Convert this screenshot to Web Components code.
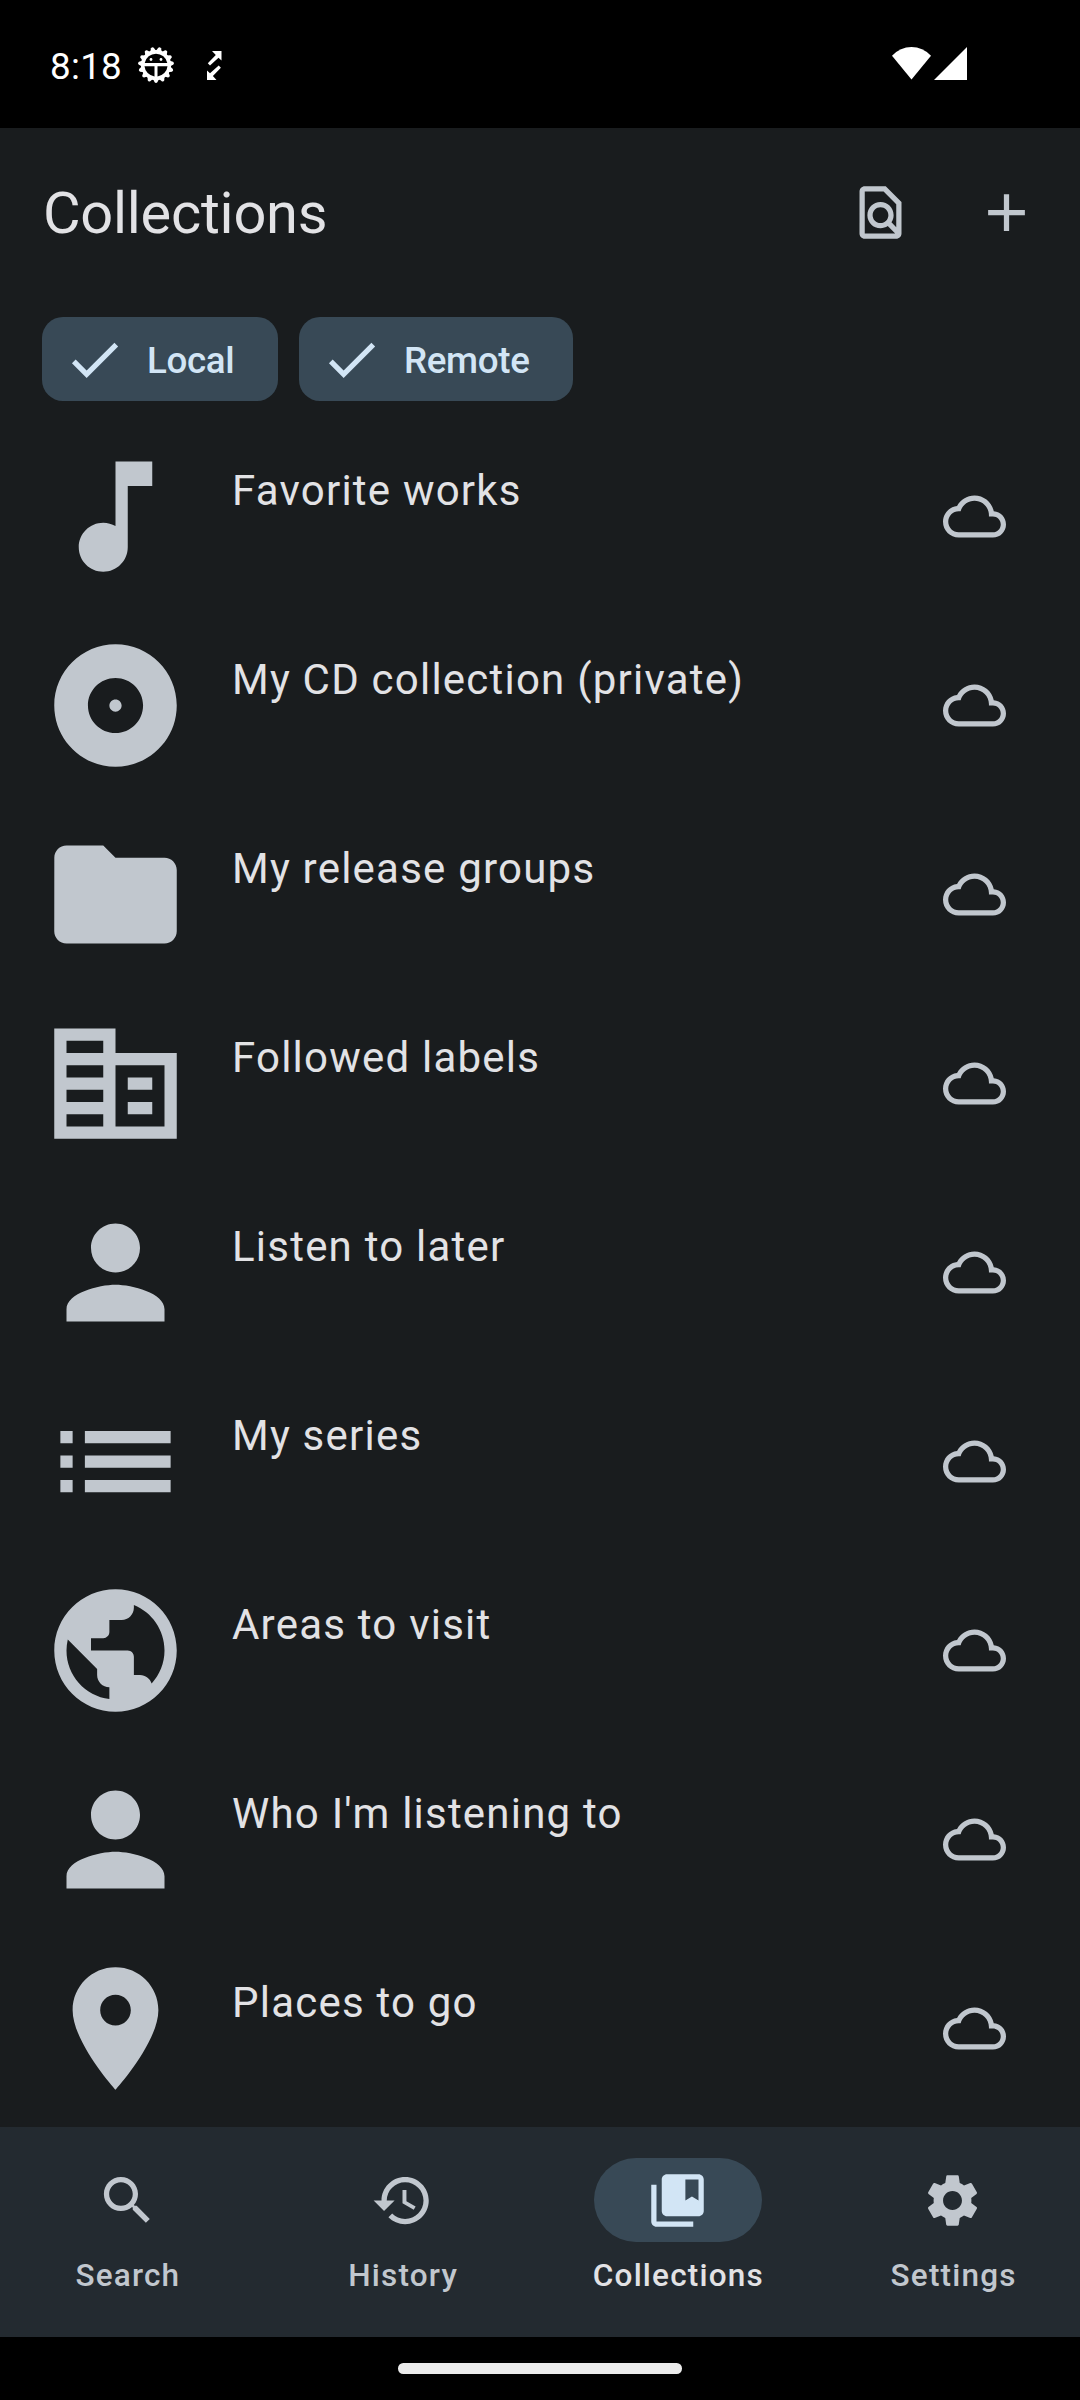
<!DOCTYPE html>
<html lang="en">
<head>
<meta charset="utf-8">
<title>Collections</title>
<style>
html,body{margin:0;padding:0;background:#000}
body{width:1080px;height:2400px;overflow:hidden;font-family:Roboto,sans-serif;color:#e2e2e5}
</style>
</head>
<body>
<collections-app></collections-app>
<script>
const PATHS = {
  find: 'M20 19.59V8l-6-6H6c-1.1 0-1.99.9-1.99 2L4 20c0 1.1.89 2 1.99 2H18c1.1 0 2-.9 2-2v-.41zM18 20H6V4h7.17L18 8.83v8.75l-1.83-1.83C16.69 14.96 17 14.02 17 13c0-2.76-2.24-5-5-5s-5 2.24-5 5 2.24 5 5 5c1.02 0 1.96-.31 2.76-.83L17.59 20H18zm-6-4c-1.66 0-3-1.34-3-3s1.34-3 3-3 3 1.34 3 3-1.34 3-3 3z',
  add: 'M19 13h-6v6h-2v-6H5v-2h6V5h2v6h6v2z',
  check: 'M9 16.17 4.83 12l-1.42 1.41L9 19 21 7l-1.41-1.41z',
  note: 'M12 3v10.55c-.59-.34-1.27-.55-2-.55-2.21 0-4 1.79-4 4s1.79 4 4 4 4-1.79 4-4V7h4V3h-6z',
  album: 'M12 2C6.48 2 2 6.48 2 12s4.48 10 10 10 10-4.48 10-10S17.52 2 12 2zm0 14.5c-2.49 0-4.5-2.01-4.5-4.5S9.51 7.5 12 7.5s4.5 2.01 4.5 4.5-2.01 4.5-4.5 4.5zm0-5.5c-.55 0-1 .45-1 1s.45 1 1 1 1-.45 1-1-.45-1-1-1z',
  folder: 'M10 4H4c-1.1 0-1.99.9-1.99 2L2 18c0 1.1.9 2 2 2h16c1.1 0 2-.9 2-2V8c0-1.1-.9-2-2-2h-8l-2-2z',
  business: 'M12 7V3H2v18h20V7H12zM10 19H4v-2h6v2zm0-4H4v-2h6v2zm0-4H4V9h6v2zm0-4H4V5h6v2zm10 12h-8V9h8v10zm-2-8h-4v2h4v-2zm0 4h-4v2h4v-2z',
  person: 'M12 12c2.21 0 4-1.79 4-4s-1.79-4-4-4-4 1.79-4 4 1.79 4 4 4zm0 2c-2.67 0-8 1.34-8 4v2h16v-2c0-2.66-5.33-4-8-4z',
  list: 'M3 13h2v-2H3v2zm0 4h2v-2H3v2zm0-8h2V7H3v2zm4 4h14v-2H7v2zm0 4h14v-2H7v2zM7 7v2h14V7H7z',
  globe: 'M12 2C6.48 2 2 6.48 2 12s4.48 10 10 10 10-4.48 10-10S17.52 2 12 2zm-1 17.93c-3.95-.49-7-3.85-7-7.93 0-.62.08-1.21.21-1.79L9 15v1c0 1.1.9 2 2 2v1.93zm6.9-2.54c-.26-.81-1-1.39-1.9-1.39h-1v-3c0-.55-.45-1-1-1H8v-2h2c.55 0 1-.45 1-1V7h2c1.1 0 2-.9 2-2v-.41c2.93 1.19 5 4.06 5 7.41 0 2.08-.8 3.97-2.1 5.39z',
  place: 'M12 2C8.13 2 5 5.13 5 9c0 5.25 7 13 7 13s7-7.75 7-13c0-3.87-3.13-7-7-7zm0 9.5c-1.38 0-2.5-1.12-2.5-2.5s1.12-2.5 2.5-2.5 2.5 1.12 2.5 2.5-1.12 2.5-2.5 2.5z',
  cloud: 'M19.35 10.04C18.67 6.59 15.64 4 12 4 9.11 4 6.6 5.64 5.35 8.04 2.34 8.36 0 10.91 0 14c0 3.31 2.69 6 6 6h13c2.76 0 5-2.24 5-5 0-2.64-2.05-4.78-4.65-4.96zM19 18H6c-2.21 0-4-1.79-4-4s1.79-4 4-4h.71C7.37 7.69 9.48 6 12 6c3.04 0 5.5 2.46 5.5 5.5v.5H19c1.66 0 3 1.34 3 3s-1.34 3-3 3z',
  search: 'M15.5 14h-.79l-.28-.27C15.41 12.59 16 11.11 16 9.5 16 5.91 13.09 3 9.5 3S3 5.91 3 9.5 5.91 16 9.5 16c1.61 0 3.09-.59 4.23-1.57l.27.28v.79l5 4.99L20.49 19l-4.99-5zm-6 0C7.01 14 5 11.99 5 9.5S7.01 5 9.5 5 14 7.01 14 9.5 11.99 14 9.5 14z',
  history: 'M13 3c-4.97 0-9 4.03-9 9H1l3.89 3.89.07.14L9 12H6c0-3.87 3.13-7 7-7s7 3.13 7 7-3.13 7-7 7c-1.93 0-3.68-.79-4.94-2.06l-1.42 1.42C8.27 19.99 10.51 21 13 21c4.97 0 9-4.03 9-9s-4.03-9-9-9zm-1 5v5l4.28 2.54.72-1.21-3.5-2.08V8H12z',
  collections: 'M4 6H2v14c0 1.1.9 2 2 2h14v-2H4V6zM20 2H8c-1.1 0-2 .9-2 2v12c0 1.1.9 2 2 2h12c1.1 0 2-.9 2-2V4c0-1.1-.9-2-2-2zm0 10-2.5-1.5L15 12V4h5v8z',
  settings: 'M19.14 12.94c.04-.3.06-.61.06-.94 0-.32-.02-.64-.07-.94l2.03-1.58c.18-.14.23-.41.12-.61l-1.92-3.32c-.12-.22-.37-.29-.59-.22l-2.39.96c-.5-.38-1.03-.7-1.62-.94l-.36-2.54c-.04-.24-.24-.41-.48-.41h-3.84c-.24 0-.43.17-.47.41l-.36 2.54c-.59.24-1.13.57-1.62.94l-2.39-.96c-.22-.08-.47 0-.59.22L2.74 8.87c-.12.21-.08.47.12.61l2.03 1.58c-.05.3-.09.63-.09.94s.02.64.07.94l-2.03 1.58c-.18.14-.23.41-.12.61l1.92 3.32c.12.22.37.29.59.22l2.39-.96c.5.38 1.03.7 1.62.94l.36 2.54c.05.24.24.41.48.41h3.84c.24 0 .44-.17.47-.41l.36-2.54c.59-.24 1.13-.56 1.62-.94l2.39.96c.22.08.47 0 .59-.22l1.92-3.32c.12-.22.07-.47-.12-.61l-2.01-1.58zM12 15.6c-1.98 0-3.6-1.62-3.6-3.6s1.62-3.6 3.6-3.6 3.6 1.62 3.6 3.6-1.62 3.6-3.6 3.6z'
};

const define = (name, render) => customElements.define(name, class extends HTMLElement {
  connectedCallback() {
    if (this.shadowRoot) return;
    this.attachShadow({ mode: 'open' }).innerHTML = render(this);
  }
});

define('md-icon', el => `
  <style>:host{display:block;flex:none;width:var(--icon-size,63px);height:var(--icon-size,63px)}svg{display:block;width:100%;height:100%}</style>
  <svg viewBox="0 0 24 24" fill="currentColor"><path fill-rule="evenodd" d="${PATHS[el.getAttribute('name')]}"/></svg>`);

define('status-bar', () => {
  let teeth = '';
  for (let i = 0; i < 15; i++) teeth += `<path d="M14.8 4.6 L16.6 .7 Q18 -.7 19.4 .7 L21.2 4.6Z" transform="rotate(${12 + i * 24} 18 18)"/>`;
  return `
  <style>
    :host{display:flex;align-items:flex-start;height:128px;box-sizing:border-box;padding:47px 113px 0 50px;background:#000;color:#fff}
    .time{font-size:36.75px;line-height:43px;letter-spacing:.3px;margin-top:-2px;width:88px}
    svg{display:block;flex:none}
    .bug{width:36px;height:36px}
    .sync{width:15px;height:29px;margin:4px 0 0 32.5px}
    .net{width:75px;height:33px;margin-left:auto}
  </style>
  <span class="time">8:18</span>
  <svg class="bug" viewBox="0 0 36 36" fill="#fff">
    ${teeth}
    <path fill-rule="evenodd" d="M18 2.900a15.100 15.100 0 1 0 0 30.200 15.100 15.100 0 0 0 0-30.200zM6.700 16a11.500 11.500 0 0 1 22.600 0zM6.500 19.200h10v10.300a11.500 11.500 0 0 1-10-10.300zM19.500 19.200h10a11.500 11.500 0 0 1-10 10.300z"/>
    <circle cx="13" cy="12.500" r="1.400"/><circle cx="23" cy="12.500" r="1.400"/>
  </svg>
  <svg class="sync" viewBox="0 0 15 29" fill="#fff">
    <path d="M5 0H14.500V9.500L11.500 6.700 3 14.500 .8 12.300 8.800 4z"/>
    <path d="M0 29V19.500L3 22.300 11.700 14.500 13.900 16.700 5.900 25 9.500 29z"/>
  </svg>
  <svg class="net" viewBox="0 0 75 33" fill="#fff">
    <path d="M0 8.700Q8.300 0 19.500 0T39 8.700L19.500 32.500z"/><path d="M75 0v33H42z"/>
  </svg>`;
});

define('top-bar', () => `
  <style>
    :host{display:flex;align-items:center;height:168px;box-sizing:border-box;padding:0 42px;color:#e2e2e5}
    h1{flex:1;margin:0;padding:4px 0 0 1px;font-weight:400;font-size:57.75px;line-height:73.5px;letter-spacing:-.25px}
    .actions{display:flex;gap:63px;color:#c1c7ce}
  </style>
  <h1><slot></slot></h1><div class="actions"><md-icon name="find"></md-icon><md-icon name="add"></md-icon></div>`);

define('filter-chip', () => `
  <style>
    :host{display:flex;align-items:center;gap:21px;height:84px;width:var(--chip-width);box-sizing:border-box;padding:0 0 0 21px;border-radius:21px;background:#384956;color:#d2e5f5;font-size:36.75px;font-weight:500;line-height:52px;letter-spacing:-.35px}
    span{padding-top:4px}
  </style>
  <md-icon name="check"></md-icon><span><slot></slot></span>`);

define('collection-row', el => `
  <style>
    :host{display:flex;align-items:center;gap:43px;height:189px;box-sizing:border-box;padding:0 74.5px 0 42px;font-size:42px;line-height:63px;letter-spacing:1.22px;color:#e2e2e5}
    md-icon{color:#c1c7ce}
    .lead{--icon-size:147px}
    .text{flex:1;align-self:flex-start;padding-top:37px}
  </style>
  <md-icon class="lead" name="${el.getAttribute('icon')}"></md-icon><span class="text"><slot></slot></span><md-icon name="cloud"></md-icon>`);

define('nav-item', el => `
  <style>
    :host{display:flex;flex:1 1 0;flex-direction:column;align-items:center;gap:12.5px;color:#c1c7ce;font-size:31.5px;font-weight:500;line-height:42px;letter-spacing:1.2px}
    .pill{display:flex;align-items:center;justify-content:center;width:168px;height:84px;border-radius:42px}
    span{padding-left:1.5px}
    :host([selected]){color:#e2e2e5}
    :host([selected]) .pill{background:#384956;color:#d2e5f5}
  </style>
  <div class="pill"><md-icon name="${el.getAttribute('icon')}"></md-icon></div><span><slot></slot></span>`);

define('nav-bar', () => `
  <style>:host{display:flex;gap:21px;flex:none;height:210px;box-sizing:border-box;padding-top:31px;background:#232a30}</style>
  <slot></slot>`);

define('gesture-bar', () => `
  <style>:host{display:flex;flex:none;height:63px;justify-content:center;align-items:center;background:#000}
  i{width:284px;height:10.5px;border-radius:5.25px;background:#ececec}</style><i></i>`);

define('collections-app', () => `
  <style>
    :host{display:flex;flex-direction:column;width:1080px;height:2400px;background:#191c1e}
    .chips{display:flex;gap:21px;padding:21px 42px}
    .local{--chip-width:236px}
    .remote{--chip-width:274px}
    .list{flex:1;min-height:0;overflow:hidden}
  </style>
  <status-bar></status-bar>
  <top-bar>Collections</top-bar>
  <div class="chips"><filter-chip class="local">Local</filter-chip><filter-chip class="remote">Remote</filter-chip></div>
  <div class="list">
    <collection-row icon="note">Favorite works</collection-row>
    <collection-row icon="album">My CD collection (private)</collection-row>
    <collection-row icon="folder">My release groups</collection-row>
    <collection-row icon="business">Followed labels</collection-row>
    <collection-row icon="person">Listen to later</collection-row>
    <collection-row icon="list">My series</collection-row>
    <collection-row icon="globe">Areas to visit</collection-row>
    <collection-row icon="person">Who I'm listening to</collection-row>
    <collection-row icon="place">Places to go</collection-row>
  </div>
  <nav-bar>
    <nav-item icon="search">Search</nav-item>
    <nav-item icon="history">History</nav-item>
    <nav-item icon="collections" selected>Collections</nav-item>
    <nav-item icon="settings">Settings</nav-item>
  </nav-bar>
  <gesture-bar></gesture-bar>`);
</script>
</body>
</html>
